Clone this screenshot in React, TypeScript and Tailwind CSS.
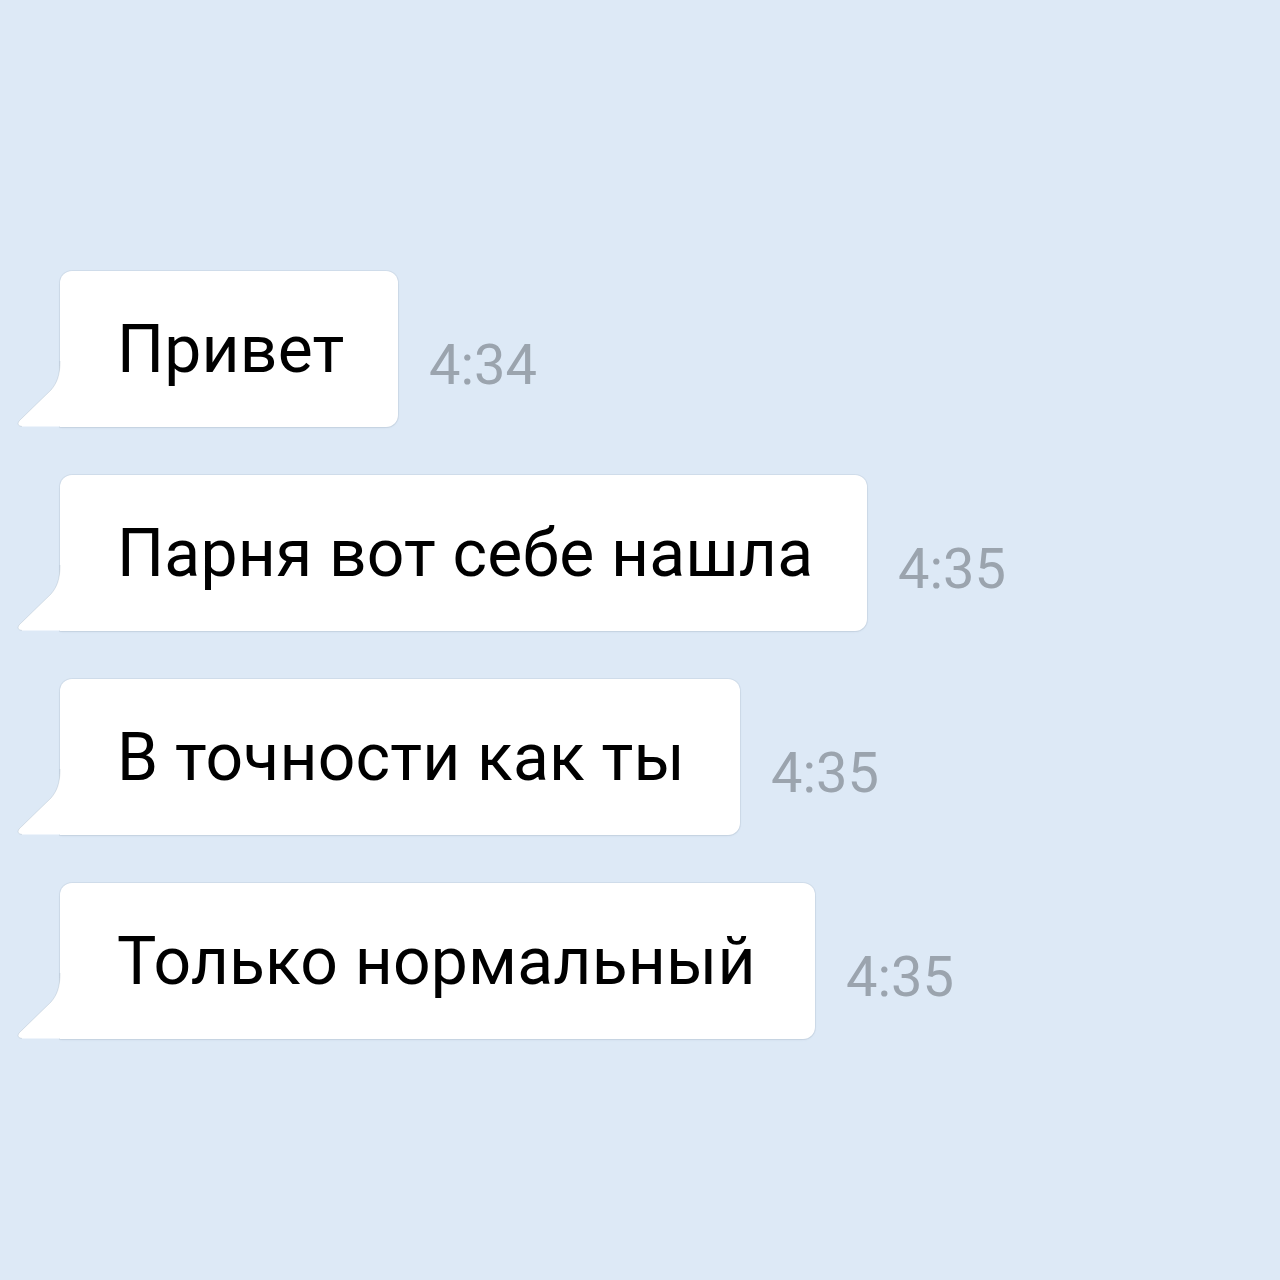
import React from "react";

const messages = [
  { text: "Привет", time: "4:34", w: "w-[338px]" },
  { text: "Парня вот себе нашла", time: "4:35", w: "w-[807px]" },
  { text: "В точности как ты", time: "4:35", w: "w-[680px]" },
  { text: "Только нормальный", time: "4:35", w: "w-[755px]" },
];

function Tail() {
  return (
    <svg
      className="absolute left-[-44px] bottom-0"
      width="46"
      height="66"
      viewBox="0 0 46 66"
    >
      <path
        d="M44 0 C44 14 41 22 35 29 L3 60 Q0 64.5 6 65.5 L46 65.5 L46 0 Z"
        fill="#ffffff"
      />
      <path
        d="M44 0 C44 14 41 22 35 29 L3 60 Q0 64.5 6 65.5"
        fill="none"
        stroke="rgba(120,140,160,0.22)"
        strokeWidth="1"
      />
    </svg>
  );
}

export default function App() {
  return (
    <div
      className="w-[1280px] h-[1280px] bg-[#dde9f6] flex flex-col gap-[48px] pt-[271px]"
      style={{ fontFamily: "Roboto, 'Noto Sans', sans-serif" }}
    >
      {messages.map((m, i) => (
        <div key={i} className="flex items-end pl-[60px]">
          <div
            className={`relative ${m.w} h-[156px] bg-white rounded-t-[12px] rounded-br-[12px] shadow-[0_0_0_1px_rgba(120,140,160,0.12),0_1px_2px_rgba(120,140,160,0.15)] flex items-center pl-[57px] pt-[2px]`}
          >
            <Tail />
            <span className="relative text-[66px] leading-none text-black tracking-[0.2px]">
              {m.text}
            </span>
          </div>
          <span className="ml-[31px] mb-[34px] text-[56px] leading-none text-[#9ba4ae]">
            {m.time}
          </span>
        </div>
      ))}
    </div>
  );
}
